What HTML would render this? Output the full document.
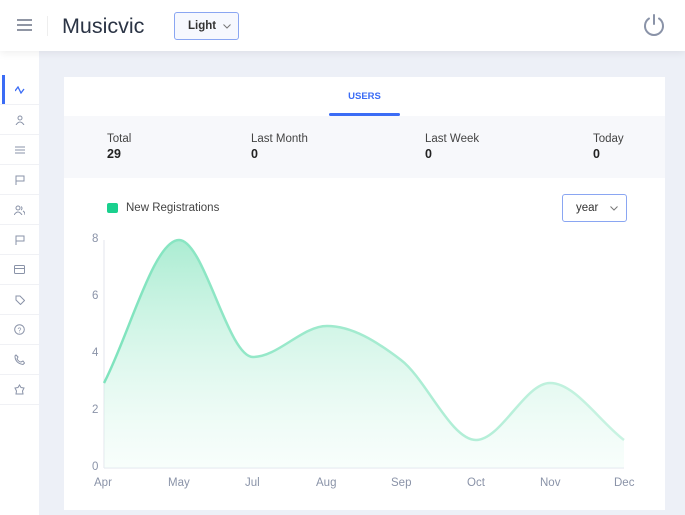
<!DOCTYPE html>
<html><head><style>
*{box-sizing:border-box;margin:0;padding:0}
body{width:685px;height:515px;overflow:hidden;background:#edf0f7;font-family:"Liberation Sans",sans-serif;position:relative;color:#333}
.hdr{position:absolute;left:0;top:0;width:685px;height:51px;background:#fff;box-shadow:0 2px 8px rgba(0,0,0,.07);z-index:2}
.side{position:absolute;left:0;top:51px;width:39px;height:464px;background:#fff}
.row{position:absolute;left:0;width:39px;height:30px;border-bottom:1px solid #f0f1f5;display:flex;align-items:center;justify-content:center}
.card{position:absolute;left:64px;top:77px;width:601px;height:433px;background:#fff}
.stats{position:absolute;left:0;top:39px;width:601px;height:62px;background:#f7f8fb}
.lbl{position:absolute;font-size:11.5px;color:#444}
.val{position:absolute;font-size:12.5px;font-weight:bold;color:#222}
.ax{position:absolute;font-size:11.5px;color:#8a93a8}
</style></head><body>
<div class="hdr">
  <svg style="position:absolute;left:17px;top:19px" width="15" height="12"><g stroke="#6b7385" stroke-width="1.5"><line x1="0" y1="1" x2="15" y2="1"/><line x1="0" y1="6" x2="15" y2="6"/><line x1="0" y1="11" x2="15" y2="11"/></g></svg>
  <div style="position:absolute;left:47px;top:16px;width:1px;height:20px;background:#eee"></div>
  <div style="position:absolute;left:62px;top:14px;font-size:21.5px;color:#2b3445">Musicvic</div>
  <div style="position:absolute;left:174px;top:12px;width:65px;height:28px;border:1px solid #8aa6f2;border-radius:3px;background:#f6f8fe;font-size:11.5px;font-weight:bold;color:#333;padding:7px 0 0 13px">Light<svg style="position:absolute;left:48px;top:11px" width="8" height="5"><path d="M0.5 0.5L4 4L7.5 0.5" fill="none" stroke="#777"/></svg></div>
  <svg style="position:absolute;left:642px;top:13px" width="24" height="24" viewBox="0 0 24 24"><path d="M7 5.5A9 9 0 1 0 17 5.5" fill="none" stroke="#8a93a8" stroke-width="2" stroke-linecap="round"/><line x1="12" y1="2" x2="12" y2="11" stroke="#8a93a8" stroke-width="2" stroke-linecap="round"/></svg>
</div>
<div class="side">
  <div style="position:absolute;left:2px;top:24px;width:3px;height:30px;background:#3b6cf5"></div>
  <div class="row" style="top:24px"><svg width="10" height="8"><path d="M0 5L3 1L6 7L9 3" fill="none" stroke="#3b6cf5" stroke-width="1.3"/></svg></div>
  <div class="row" style="top:54px"><svg width="10" height="10"><g fill="none" stroke="#8a93a8"><circle cx="5" cy="3" r="2"/><path d="M1 10Q5 4 9 10"/></g></svg></div>
  <div class="row" style="top:84px"><svg width="10" height="8"><g stroke="#8a93a8"><line x1="0" y1="1" x2="10" y2="1"/><line x1="0" y1="4" x2="10" y2="4"/><line x1="0" y1="7" x2="10" y2="7"/></g></svg></div>
  <div class="row" style="top:114px"><svg width="10" height="10"><path d="M1 10V1H9V6H1" fill="none" stroke="#8a93a8"/></svg></div>
  <div class="row" style="top:144px"><svg width="11" height="10"><g fill="none" stroke="#8a93a8"><circle cx="4" cy="3" r="2"/><path d="M0 10Q4 4 8 10M7 1.5A2 2 0 0 1 7 5M9 6Q11 7 11 10"/></g></svg></div>
  <div class="row" style="top:174px"><svg width="10" height="10"><path d="M1 10V1H9V6H1" fill="none" stroke="#8a93a8"/></svg></div>
  <div class="row" style="top:204px"><svg width="11" height="9"><g fill="none" stroke="#8a93a8"><rect x="0.5" y="0.5" width="10" height="8" rx="1"/><line x1="0" y1="3.5" x2="11" y2="3.5"/></g></svg></div>
  <div class="row" style="top:234px"><svg width="10" height="10"><path d="M1 1H5L9.5 5.5L5.5 9.5L1 5Z" fill="none" stroke="#8a93a8"/></svg></div>
  <div class="row" style="top:264px"><svg width="11" height="11"><circle cx="5.5" cy="5.5" r="4.8" fill="none" stroke="#8a93a8"/><text x="3.5" y="8.5" font-size="7" fill="#8a93a8">?</text></svg></div>
  <div class="row" style="top:294px"><svg width="11" height="11"><path d="M2 1L4 3L3 5Q5 8 7 8L9 7L10.5 9L9 10.5Q1 9 1 2Z" fill="none" stroke="#8a93a8"/></svg></div>
  <div class="row" style="top:324px"><svg width="11" height="11"><path d="M5.5 1L7 3.5L10 4L8.5 7L9 10H2L2.5 7L1 4L4 3.5Z" fill="none" stroke="#8a93a8"/></svg></div>
</div>
<div class="card">
  <div style="position:absolute;left:265px;top:14px;width:71px;text-align:center;font-size:9.5px;font-weight:bold;color:#3b6cf5">USERS</div>
  <div style="position:absolute;left:265px;top:36px;width:71px;height:3px;background:#3b6cf5;border-radius:2px"></div>
  <div class="stats">
    <div class="lbl" style="left:43px;top:17px">Total</div><div class="val" style="left:43px;top:31px">29</div>
    <div class="lbl" style="left:187px;top:17px">Last Month</div><div class="val" style="left:187px;top:31px">0</div>
    <div class="lbl" style="left:361px;top:17px">Last Week</div><div class="val" style="left:361px;top:31px">0</div>
    <div class="lbl" style="left:529px;top:17px">Today</div><div class="val" style="left:529px;top:31px">0</div>
  </div>
  <div style="position:absolute;left:43px;top:126px;width:11px;height:10px;background:#1ad08e;border-radius:2px"></div>
  <div style="position:absolute;left:62px;top:125px;font-size:11.5px;color:#444">New Registrations</div>
  <div style="position:absolute;left:498px;top:117px;width:65px;height:28px;border:1px solid #8aa6f2;border-radius:3px;font-size:11.5px;color:#333;padding:7px 0 0 13px">year<svg style="position:absolute;left:47px;top:11px" width="8" height="5"><path d="M0.5 0.5L4 4L7.5 0.5" fill="none" stroke="#777"/></svg></div>
</div>
<svg style="position:absolute;left:0;top:0" width="685" height="515">
  <defs><linearGradient id="g" x1="0" y1="0" x2="0" y2="1"><stop offset="0" stop-color="#8fe6c3" stop-opacity=".75"/><stop offset="1" stop-color="#e8fbf3" stop-opacity=".3"/></linearGradient>
  <linearGradient id="s" x1="0" y1="0" x2="1" y2="0"><stop offset="0" stop-color="#7ee3bd"/><stop offset="1" stop-color="#c9f3e2"/></linearGradient></defs>
  <line x1="104" y1="240" x2="104" y2="468" stroke="#e3e6ee"/>
  <line x1="104" y1="468" x2="624" y2="468" stroke="#e3e6ee"/>
  <path d="M104 383C129 335 154 240 179 240C204 240 228 357 253 357C278 357 302 326 327 326C352 326 376 341 401 360C426 379 451 440 476 440C501 440 525 383 550 383C575 383 599 421 624 440L624 468L104 468Z" fill="url(#g)"/>
  <path d="M104 383C129 335 154 240 179 240C204 240 228 357 253 357C278 357 302 326 327 326C352 326 376 341 401 360C426 379 451 440 476 440C501 440 525 383 550 383C575 383 599 421 624 440" fill="none" stroke="url(#s)" stroke-width="2.5"/>
</svg>
<div class="ax" style="left:92px;top:233px">8</div>
<div class="ax" style="left:92px;top:290px">6</div>
<div class="ax" style="left:92px;top:347px">4</div>
<div class="ax" style="left:92px;top:404px">2</div>
<div class="ax" style="left:92px;top:461px">0</div>
<div class="ax" style="left:94px;top:477px">Apr</div>
<div class="ax" style="left:168px;top:477px">May</div>
<div class="ax" style="left:245px;top:477px">Jul</div>
<div class="ax" style="left:316px;top:477px">Aug</div>
<div class="ax" style="left:391px;top:477px">Sep</div>
<div class="ax" style="left:467px;top:477px">Oct</div>
<div class="ax" style="left:540px;top:477px">Nov</div>
<div class="ax" style="left:614px;top:477px">Dec</div>
</body></html>
